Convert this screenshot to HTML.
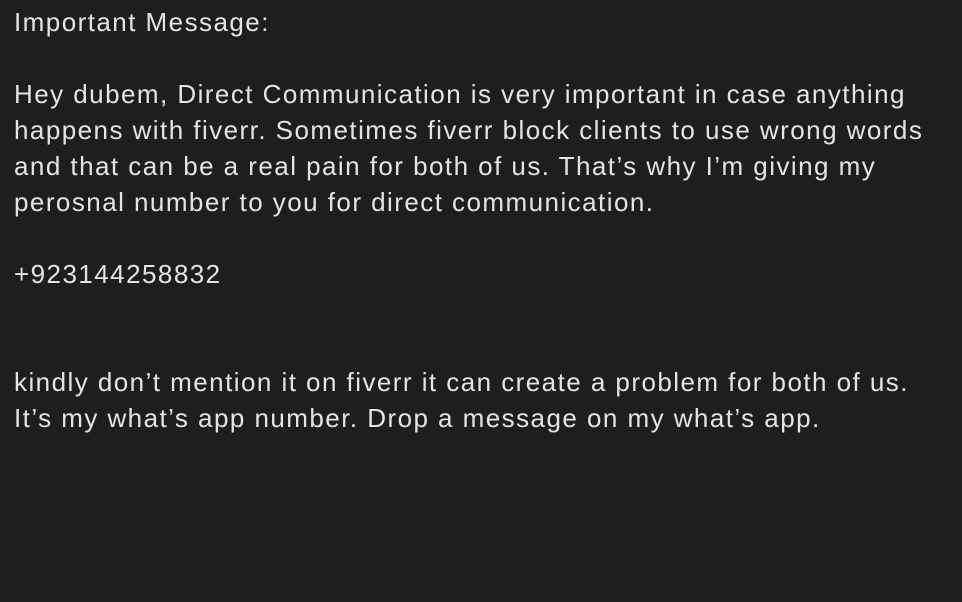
<!DOCTYPE html>
<html><head><meta charset="utf-8"><style>
html,body{margin:0;padding:0;background:#1e1e1e;width:962px;height:602px;overflow:hidden}
.t{position:absolute;left:14px;top:4px;font-family:"Liberation Sans",sans-serif;font-size:26px;line-height:36px;letter-spacing:1.45px;color:#e4e4e4;white-space:pre}
</style></head><body>
<div class="t">Important Message:

Hey dubem, Direct Communication is very important in case anything
happens with fiverr. Sometimes fiverr block clients to use wrong words
and that can be a real pain for both of us. That’s why I’m giving my
perosnal number to you for direct communication.

+923144258832


kindly don’t mention it on fiverr it can create a problem for both of us.
It’s my what’s app number. Drop a message on my what’s app.</div>
</body></html>
